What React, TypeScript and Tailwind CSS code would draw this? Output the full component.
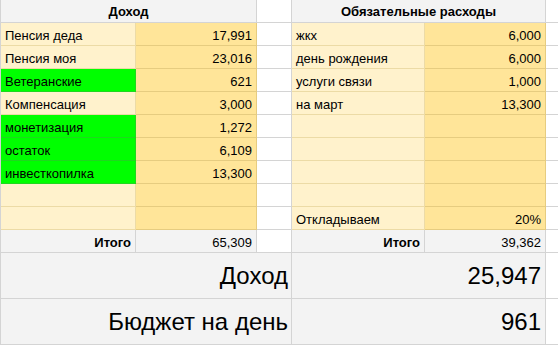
type Row = {
  left: [string, string, boolean]
  right: [string, string]
}

const rows: Row[] = [
  { left: ['Пенсия деда', '17,991', false], right: ['жкх', '6,000'] },
  { left: ['Пенсия моя', '23,016', false], right: ['день рождения', '6,000'] },
  { left: ['Ветеранские', '621', true], right: ['услуги связи', '1,000'] },
  { left: ['Компенсация', '3,000', false], right: ['на март', '13,300'] },
  { left: ['монетизация', '1,272', true], right: ['', ''] },
  { left: ['остаток', '6,109', true], right: ['', ''] },
  { left: ['инвесткопилка', '13,300', true], right: ['', ''] },
  { left: ['', '', false], right: ['', ''] },
  { left: ['', '', false], right: ['Откладываем', '20%'] },
]

const font = { fontFamily: '"Liberation Sans", Arial, sans-serif' }

// plain sheet cell, text sits at the bottom like in sheets
function Cell({ className = '', children }: { className?: string; children?: React.ReactNode }) {
  return (
    <div className={`h-[23px] flex items-end pb-[2px] px-[4px] text-[13px] leading-[15px] text-black border-b border-r whitespace-nowrap overflow-hidden ${className}`}>
      {children}
    </div>
  )
}

export default function App() {
  return (
    <div className="w-[558px] h-[346px] bg-white overflow-hidden" style={font}>
      <div className="grid grid-cols-[135px_121px_35px_133px_121px_13px] border-l border-[#d4d4d4]">
        {/* header row */}
        <div className="col-span-2 h-[23px] flex items-end justify-center pb-[3px] text-[13px] leading-[15px] font-bold bg-[#f3f3f3] border-b border-r border-[#d4d4d4]">
          Доход
        </div>
        <Cell className="border-[#d4d4d4]" />
        <div className="col-span-2 h-[23px] flex items-end justify-center pb-[3px] text-[13px] leading-[15px] font-bold bg-[#f3f3f3] border-b border-r border-[#d4d4d4]">
          Обязательные расходы
        </div>
        <Cell className="border-b border-r-0 border-[#d4d4d4]" />

        {rows.map((r, i) => (
          <div key={i} className="contents">
            <Cell className={r.left[2] ? 'bg-[#00ff00] border-[#1fd81f]' : 'bg-[#fff2cc] border-[#ecdba6]'}>
              {r.left[0]}
            </Cell>
            <Cell className="bg-[#ffe599] border-[#e6cc80] justify-end pr-[4px]">{r.left[1]}</Cell>
            <Cell className="border-[#d4d4d4]" />
            <Cell className="bg-[#fff2cc] border-[#ecdba6]">{r.right[0]}</Cell>
            <Cell className="bg-[#ffe599] border-[#e6cc80] justify-end pr-[4px]">{r.right[1]}</Cell>
            <Cell className="border-r-0 border-[#d4d4d4]" />
          </div>
        ))}

        {/* totals */}
        <Cell className="bg-[#f3f3f3] border-[#d4d4d4] justify-end font-bold">Итого</Cell>
        <Cell className="bg-[#f3f3f3] border-[#d4d4d4] justify-end pr-[4px]">65,309</Cell>
        <Cell className="border-[#d4d4d4]" />
        <Cell className="bg-[#f3f3f3] border-[#d4d4d4] justify-end font-bold">Итого</Cell>
        <Cell className="bg-[#f3f3f3] border-[#d4d4d4] justify-end pr-[4px]">39,362</Cell>
        <Cell className="border-r-0 border-[#d4d4d4]" />

        {/* big summary rows */}
        {[
          ['Доход', '25,947'],
          ['Бюджет на день', '961'],
        ].map(([label, value]) => (
          <div key={label} className="contents">
            <div className="col-span-3 h-[46px] flex items-end justify-end pb-[8px] pr-[3px] text-[24px] leading-[28px] text-black bg-[#f3f3f3] border-b border-r border-[#d4d4d4]">
              {label}
            </div>
            <div className="col-span-2 h-[46px] flex items-end justify-end pb-[8px] pr-[4px] text-[24px] leading-[28px] text-black bg-[#f3f3f3] border-b border-r border-[#d4d4d4]">
              {value}
            </div>
            <div className="h-[46px] border-b border-[#d4d4d4]" />
          </div>
        ))}
      </div>
    </div>
  )
}
